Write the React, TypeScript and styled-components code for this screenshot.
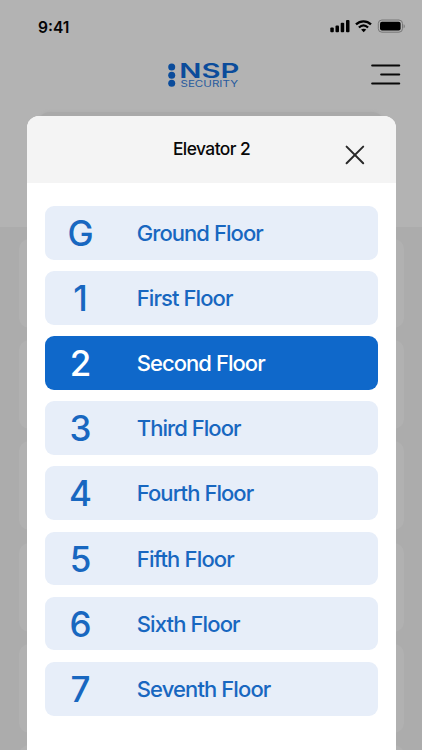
import React from "react";
import styled, { createGlobalStyle } from "styled-components";

const GlobalStyle = createGlobalStyle`
  * { box-sizing: border-box; }
  body {
    margin: 0;
    overflow: hidden;
    background: #acacac;
    font-family: Inter, "Liberation Sans", sans-serif;
  }
`;

const Screen = styled.main`
  position: relative;
  width: 422px;
  height: 750px;
  overflow: hidden;
  background: #acacac;
`;

const TopArea = styled.header`
  height: 227px;
  background: #b3b3b3;
`;

const StatusBar = styled.div`
  height: 52px;
  padding: 18px 17px 0 38px;
  display: flex;
  align-items: flex-start;
  justify-content: space-between;
`;

const Clock = styled.span`
  font-size: 15.6px;
  line-height: 19px;
  font-weight: 600;
  letter-spacing: 0;
  color: #050505;
`;

const StatusIcons = styled.svg`
  width: 76px;
  height: 16px;
  display: block;
`;

const NavBar = styled.nav`
  height: 48px;
  padding: 10px 21px 0 167px;
  display: flex;
  align-items: flex-start;
  justify-content: space-between;
`;

const Logo = styled.svg`
  width: 73px;
  height: 26px;
  display: block;
  overflow: visible;
`;

const MenuIcon = styled.svg`
  width: 30px;
  height: 22px;
  margin-top: 1px;
  display: block;
`;

const SearchPanel = styled.div`
  width: 346px;
  height: 80px;
  margin: 12px auto 0;
  border-radius: 12px;
  background: #a9a9a9;
  box-shadow: 0 0 3px #a9a9a9;
`;

const CardList = styled.div`
  padding: 12px 18px 0 18.5px;
  display: grid;
  gap: 12.2px;
`;

const Card = styled.div`
  height: 89px;
  border-radius: 10px;
  background: #b1b1b1;
`;

const Sheet = styled.section`
  position: absolute;
  left: 27.3px;
  top: 115.7px;
  width: 368.5px;
  height: 640px;
  border-radius: 12px 12px 0 0;
  overflow: hidden;
  background: #fff;
`;

const SheetHeader = styled.div`
  height: 67.3px;
  padding: 0 30px;
  display: grid;
  grid-template-columns: 22px 1fr 22px;
  align-items: center;
  background: #f4f4f4;
`;

const Title = styled.h1`
  grid-column: 2;
  margin: 0;
  font-size: 17.4px;
  line-height: 22px;
  font-weight: 500;
  letter-spacing: -0.55px;
  text-align: center;
  color: #080808;
`;

const CloseButton = styled.button`
  padding: 11px 0 0;
  border: 0;
  background: none;
  svg { display: block; }
`;

const Floors = styled.div`
  padding: 23px 18px 0 17.7px;
  display: grid;
  gap: 11.44px;
`;

const FloorButton = styled.button<{ $selected: boolean }>`
  height: 53.7px;
  padding: 1px 0 0;
  border: 0;
  border-radius: 9px;
  display: grid;
  grid-template-columns: 71px 1fr;
  column-gap: 20.8px;
  align-items: center;
  font-family: inherit;
  text-align: left;
  background: ${(p) => (p.$selected ? "#0f68ca" : "#e7eef9")};
  color: ${(p) => (p.$selected ? "#fff" : "#1867c0")};
`;

const FloorCode = styled.span`
  font-size: 35px;
  line-height: 53px;
  font-weight: 450;
  text-align: center;
`;

const FloorName = styled.span<{ $tracking: number }>`
  font-size: 22px;
  line-height: 53px;
  font-weight: 470;
  white-space: nowrap;
  letter-spacing: ${(p) => p.$tracking}px;
`;

const floors = [
  { code: "G", name: "Ground Floor", tracking: -0.94 },
  { code: "1", name: "First Floor", tracking: -0.92 },
  { code: "2", name: "Second Floor", tracking: -0.96 },
  { code: "3", name: "Third Floor", tracking: -0.96 },
  { code: "4", name: "Fourth Floor", tracking: -0.94 },
  { code: "5", name: "Fifth Floor", tracking: -0.82 },
  { code: "6", name: "Sixth Floor", tracking: -0.88 },
  { code: "7", name: "Seventh Floor", tracking: -0.9 },
];

export default function App() {
  return (
    <Screen>
      <GlobalStyle />
      <TopArea>
        <StatusBar>
          <Clock>9:41</Clock>
          <StatusIcons viewBox="329 18 76 16">
            <rect x="330.3" y="27.6" width="3.5" height="4.6" rx="1" />
            <rect x="335.5" y="25.4" width="3.5" height="6.8" rx="1" />
            <rect x="340.7" y="22.7" width="3.5" height="9.5" rx="1" />
            <rect x="346" y="20" width="3.5" height="12.2" rx="1" />
            <g fill="none" stroke="#000" strokeWidth="2.3">
              <path d="M356 24.4c4.3-4.1 10.7-4.1 15 0" />
              <path d="M358.9 27.5c2.8-2.6 6.4-2.6 9.2 0" />
            </g>
            <path d="M361.1 29.6c1.5-1.3 3.7-1.3 5.2 0l-2.6 2.6z" />
            <rect x="378.3" y="20" width="24.2" height="12.2" rx="3.6" fill="none" stroke="#777" strokeWidth="1" />
            <rect x="380" y="21.8" width="20.6" height="8.6" rx="2" />
            <path d="M403.6 24.2v4c1.6-.7 1.6-3.3 0-4z" fill="#777" />
          </StatusIcons>
        </StatusBar>
        <NavBar>
          <Logo viewBox="167 62 73 26" fill="#0b4c9b">
            <circle cx="171.7" cy="67.1" r="3.5" />
            <circle cx="171.7" cy="75.2" r="3.5" />
            <circle cx="171.7" cy="83.3" r="3.5" />
            <text x="179.3" y="78.2" fontFamily="Inter" fontSize="20.6" fontWeight="640" textLength="60" lengthAdjust="spacingAndGlyphs">NSP</text>
            <text x="180.5" y="87.1" fontFamily="Inter" fontSize="8.6" fontWeight="400" fill="#285b9e" textLength="57.5" lengthAdjust="spacingAndGlyphs">SECURITY</text>
          </Logo>
          <MenuIcon viewBox="371 63 30 22" fill="none" stroke="#080808" strokeWidth="2.1" strokeLinecap="round">
            <path d="M372.2 65.5h27M381.2 74.5h18M372.2 83.5h27" />
          </MenuIcon>
        </NavBar>
        <SearchPanel />
      </TopArea>
      <CardList>
        {[1, 2, 3, 4, 5, 6].map((n) => <Card key={n} />)}
      </CardList>
      <Sheet>
        <SheetHeader>
          <Title>Elevator 2</Title>
          <CloseButton aria-label="Close">
            <svg width="22" height="22" viewBox="0 0 22 22" fill="none" stroke="#292929" strokeWidth="2" strokeLinecap="round">
              <path d="M2.6 2.6l16.6 16.6M19.2 2.6L2.6 19.2" />
            </svg>
          </CloseButton>
        </SheetHeader>
        <Floors>
          {floors.map((f) => (
            <FloorButton key={f.code} $selected={f.code === "2"}>
              <FloorCode>{f.code}</FloorCode>
              <FloorName $tracking={f.tracking}>{f.name}</FloorName>
            </FloorButton>
          ))}
        </Floors>
      </Sheet>
    </Screen>
  );
}
